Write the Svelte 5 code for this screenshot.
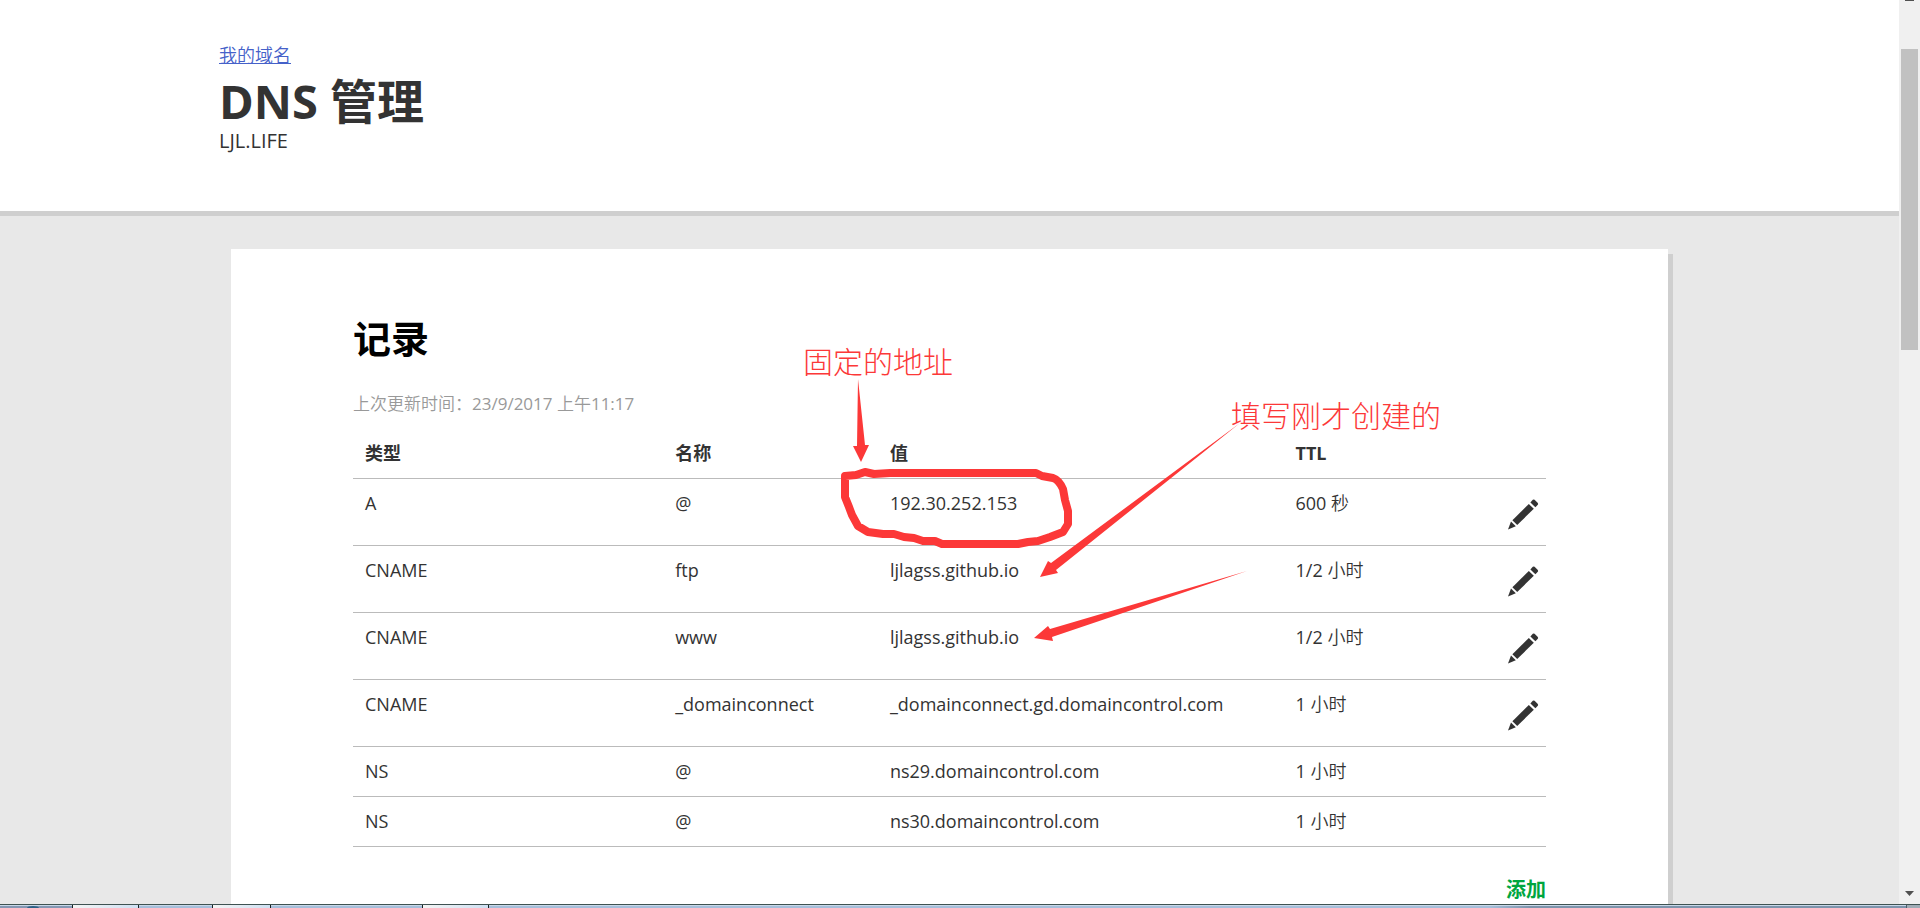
<script lang="ts">
  interface DnsRecord {
    type: string;
    name: string;
    value: string;
    ttl: string;
    editable: boolean;
  }

  const domain = 'LJL.LIFE';
  const updated = '23/9/2017 上午11:17';

  const records: DnsRecord[] = [
    { type: 'A', name: '@', value: '192.30.252.153', ttl: '600 秒', editable: true },
    { type: 'CNAME', name: 'ftp', value: 'ljlagss.github.io', ttl: '1/2 小时', editable: true },
    { type: 'CNAME', name: 'www', value: 'ljlagss.github.io', ttl: '1/2 小时', editable: true },
    { type: 'CNAME', name: '_domainconnect', value: '_domainconnect.gd.domaincontrol.com', ttl: '1 小时', editable: true },
    { type: 'NS', name: '@', value: 'ns29.domaincontrol.com', ttl: '1 小时', editable: false },
    { type: 'NS', name: '@', value: 'ns30.domaincontrol.com', ttl: '1 小时', editable: false },
  ];

  // hand-drawn arrows, each one a thin tail that widens into the head
  const arrows = [
    '858,379 857,446 853,446 861,462 869,445 865,445',
    '1240,423 1051,563 1048,561 1040,577 1058,573 1056,570',
    '1247,571 1050,629 1048,626 1034,638 1053,641 1052,637',
  ];
</script>

<div class="screen">
  <div class="window">
    <div class="page">
      <header>
        <div class="head">
          <a class="crumb" href="#domains">我的域名</a>
          <h1>DNS 管理</h1>
          <div class="domain">{domain}</div>
        </div>
      </header>

      <main>
        <section class="card">
          <h2>记录</h2>
          <p class="updated">上次更新时间：{updated}</p>
          <table>
            <thead>
              <tr>
                <th class="type">类型</th>
                <th class="name">名称</th>
                <th class="value">值</th>
                <th class="ttl">TTL</th>
                <th class="edit"></th>
              </tr>
            </thead>
            <tbody>
              {#each records as r}
                <tr>
                  <td>{r.type}</td>
                  <td>{r.name}</td>
                  <td>{r.value}</td>
                  <td>{r.ttl}</td>
                  <td class="edit">
                    {#if r.editable}
                      <button class="pencil" aria-label="编辑">
                        <svg viewBox="0 0 30 30" width="30" height="30">
                          <path d="M0 30.4 L3 22.6 L7.8 27.2 Z" />
                          <path d="M4.4 21.2 L20.8 5 L25.8 9.8 L9.2 26 Z" />
                          <path d="M22.4 3.4 L24.8 0.8 Q25.6 0 26.6 0.8 L29.8 4 Q30.4 5 29.8 5.8 L27.4 8.2 Z" />
                        </svg>
                      </button>
                    {/if}
                  </td>
                </tr>
              {/each}
            </tbody>
          </table>
          <div class="actions"><a class="add" href="#add">添加</a></div>

          <svg class="notes" viewBox="231 249 1437 655" width="1437" height="655">
            <path
              class="ring"
              d="M845 476 L856 475 L865 472 L874 474 L890 473 H1036 L1042 476 L1053 478 Q1059 480 1063 489 L1065 500 L1068 511 V524 L1063 532 L1050 537 L1038 541 L1028 542 L1018 544 H942 L935 541 L923 541 L914 538 L904 537 L894 534 L883 534 L868 532 L858 526 L852 515 L849 507 L845 497 Z"
            />
            {#each arrows as points}
              <polygon {points} />
            {/each}
            <text x="803" y="373">固定的地址</text>
            <text x="1231" y="427">填写刚才创建的</text>
          </svg>
        </section>
      </main>
    </div>

    <div class="scrollbar">
      <span class="up"></span>
      <span class="thumb"></span>
      <span class="down"></span>
    </div>
  </div>

  <div class="taskbar">
    <span class="start"></span>
    <span class="task first"></span>
    <span class="task second"></span>
    <span class="task third"></span>
    <span class="peek"></span>
  </div>
</div>

<style>
  :global(body) { margin: 0; }
  .screen {
    display: flex;
    flex-direction: column;
    height: 100vh;
    overflow: hidden;
    color: #333;
    font: 18px/25px "Open Sans", "Noto Sans CJK SC", sans-serif;
  }
  .window { display: flex; flex: 1; min-height: 0; }
  .page { flex: 1; min-width: 0; overflow: hidden; background: #e8e8e8; }

  header { background: #fff; border-bottom: 5px solid #cfcfcf; padding: 43px 24px 58px; }
  .head { max-width: 1461px; margin: 0 auto; }
  .crumb { display: block; width: fit-content; color: #4561c9; }
  .crumb, .updated, td { font-family: "Open Sans", "Noto Sans CJK SC DemiLight", "Noto Sans CJK SC", sans-serif; }
  h1 { margin: 8px 0 0; font-size: 47px; line-height: 50px; font-weight: 700; }
  .domain { margin-top: 2px; font-size: 20px; }

  main { padding: 33px 24px 0; }
  .card {
    position: relative;
    box-sizing: border-box;
    max-width: 1437px;
    margin: 0 auto;
    padding: 65px 122px 80px;
    background: #fff;
    box-shadow: 5px 5px 0 #cfcfcf;
  }
  h2 { margin: 0 0 29px; font-size: 38px; line-height: 48px; font-weight: 700; color: #000; }
  .updated { margin: 0 0 13px; font-size: 17px; color: #999; }

  table { width: 100%; table-layout: fixed; border-collapse: separate; border-spacing: 0; }
  th, td { padding: 12px; text-align: left; vertical-align: top; border-bottom: 1px solid #bbb; }
  th { box-sizing: border-box; font-weight: 700; }
  .type { width: 26%; }
  .name { width: 18%; }
  .value { width: 34%; }
  .ttl { width: 15%; }
  .edit { padding-right: 8px; text-align: right; }
  .pencil { display: block; margin-left: auto; padding: 8px 0 4px; border: 0; background: none; cursor: pointer; }
  .pencil svg { display: block; fill: #333; overflow: visible; }

  .actions { margin-top: 30px; text-align: right; }
  .add { color: #00a63f; font-size: 20px; font-weight: 700; text-decoration: none; }

  .notes { position: absolute; top: 0; left: 0; pointer-events: none; fill: #fc3838; }
  .notes text { font: 300 30px "Noto Sans CJK SC", sans-serif; }
  .ring { fill: none; stroke: #fc3838; stroke-width: 8; stroke-linejoin: round; }

  .scrollbar { display: flex; flex-direction: column; width: 17px; padding: 0 2px; background: #f0f0f0; }
  .up { width: 9px; height: 1px; margin: 0 auto 48px; background: #505050; }
  .thumb { height: 301px; background: #c1c1c1; }
  .down { width: 9px; height: 5px; margin: auto auto 8px; background: #505050; clip-path: polygon(0 0, 100% 0, 50% 100%); }

  .taskbar {
    display: flex;
    height: 3px;
    border-top: 1px solid #3f5252;
    box-shadow: inset 0 1px #c8d8e8;
    background: linear-gradient(90deg, #8497b3 0 66px, #a6bfdb 130px 1490px, #7d94ac 1530px);
  }
  .task { box-sizing: border-box; border: 1px solid #1a2222; border-width: 0 1px; background: linear-gradient(90deg, #f4f4f4, #cfe0f2); }
  .start { width: 12px; margin-left: 27px; background: #2d6187; clip-path: ellipse(6px 2px at 50% 100%); }
  .first { width: 67px; margin-left: 33px; }
  .second { width: 59px; margin-left: 73px; }
  .third { width: 67px; margin-left: 151px; }
  .peek { width: 13px; margin-left: auto; border-left: 1px solid #4f5f6c; background: #a0acb6; }
</style>
